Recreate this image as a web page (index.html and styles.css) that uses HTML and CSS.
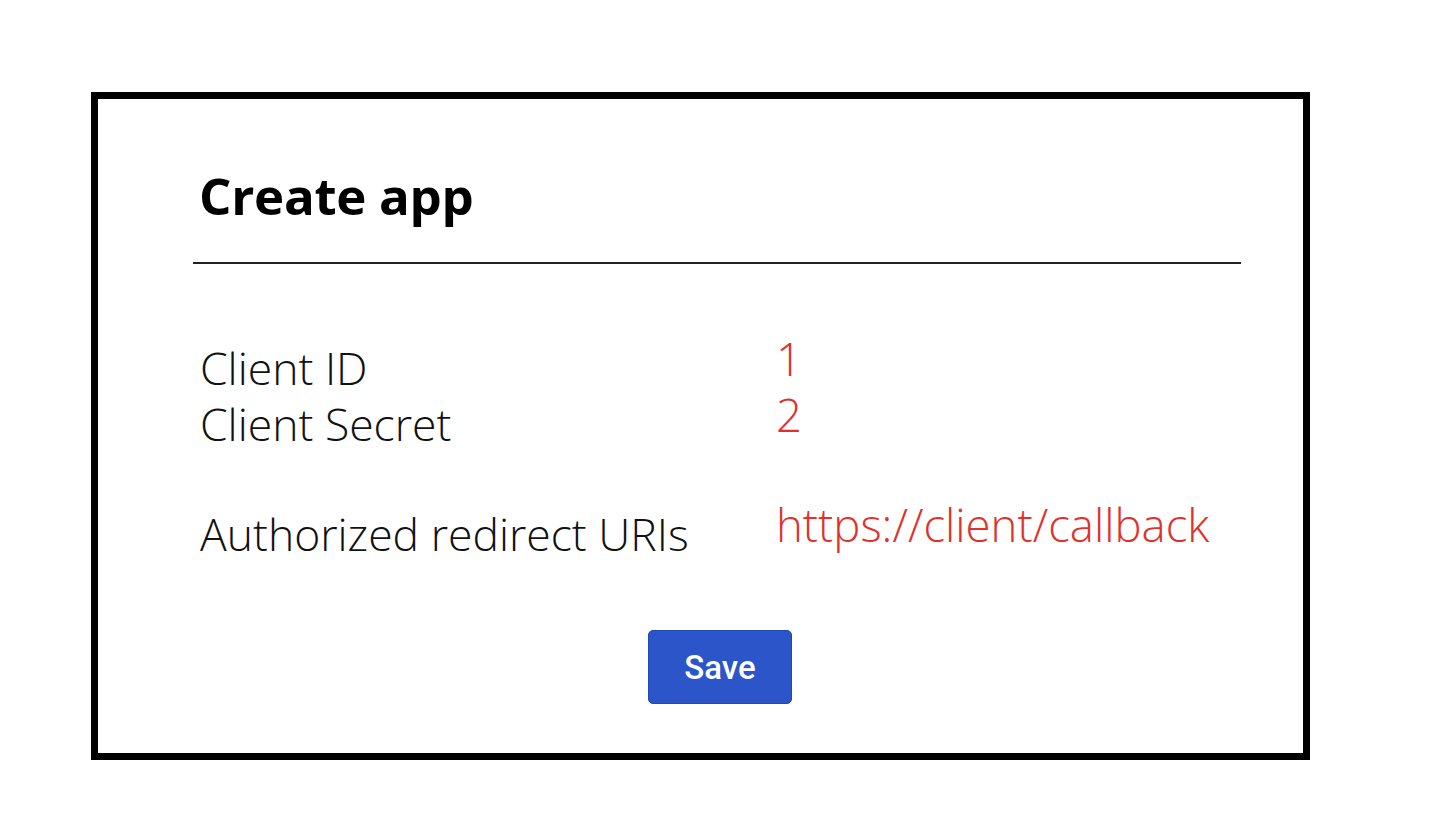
FILE: index.html
```html
<!DOCTYPE html>
<html lang="en">
<head>
<meta charset="utf-8">
<title>Create app</title>
<link rel="stylesheet" href="styles.css">
</head>
<body>
  <section class="card">
    <h1 class="title">Create app</h1>
    <hr class="divider">
    <div class="fields">
      <div class="field-group">
        <span class="label">Client ID</span>
        <span class="value">1</span>
        <span class="label">Client Secret</span>
        <span class="value">2</span>
      </div>
      <div class="field-group">
        <span class="label">Authorized redirect URIs</span>
        <span class="value">https://client/callback</span>
      </div>
    </div>
    <div class="actions">
      <button class="btn-save" type="button">Save</button>
    </div>
  </section>
</body>
</html>
```

FILE: styles.css
```css
html, body {
  margin: 0;
  padding: 0;
  background: #ffffff;
}

body {
  font-family: "Open Sans", "Liberation Sans", sans-serif;
  color: #111;
}

.card {
  box-sizing: border-box;
  width: 1219px;
  margin: 92px 0 0 91px;
  border: 7px solid #000;
  padding: 66px 62px 49px 95px;
  display: flex;
  flex-direction: column;
}

.title {
  margin: 0;
  padding-left: 6px;
  font-size: 51px;
  line-height: 60px;
  font-weight: 700;
  letter-spacing: -0.3px;
  color: #000;
}

.divider {
  margin: 37px 0 0 0;
  border: 0;
  height: 2px;
  background: #222;
}

.fields {
  display: flex;
  flex-direction: column;
  gap: 54px;
  margin-top: 76px;
  padding-left: 7px;
}

.field-group {
  display: grid;
  grid-template-columns: 576px auto;
}

.label {
  font-size: 44.5px;
  line-height: 56px;
  font-weight: 300;
  color: #111;
}

.value {
  font-size: 45.5px;
  line-height: 56px;
  font-weight: 300;
  color: #e0312b;
  margin-top: -10px;
  margin-bottom: 10px;
}

.actions {
  display: flex;
  justify-content: center;
  margin-top: 68px;
  padding-left: 6px;
}

.btn-save {
  box-sizing: border-box;
  width: 144px;
  height: 74px;
  border: 1px solid #1f48b8;
  border-radius: 5px;
  background: #2b55c8;
  color: #fff;
  font-family: Roboto, "Liberation Sans", sans-serif;
  font-size: 33px;
  font-weight: 500;
  padding: 0;
  cursor: pointer;
}
```
